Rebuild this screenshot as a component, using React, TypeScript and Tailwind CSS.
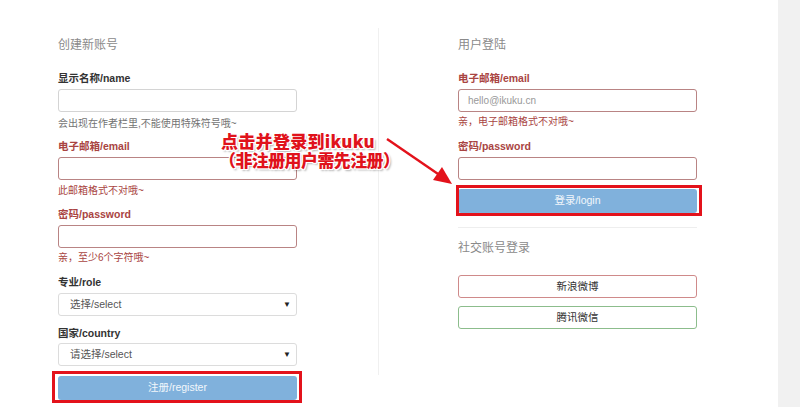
const font = { fontFamily: '"Liberation Sans", "Noto Sans CJK SC", sans-serif' };

function Label({ text, error }: { text: string; error?: boolean }) {
  return (
    <div
      className={`text-[10.5px] leading-[14px] font-bold ${error ? "text-[#a94442]" : "text-[#333]"}`}
    >
      {text}
    </div>
  );
}

function Help({ text, error }: { text: string; error?: boolean }) {
  return (
    <div className={`text-[10px] leading-[14px] ${error ? "text-[#a94442]" : "text-[#737373]"}`}>
      {text}
    </div>
  );
}

function Input({ error, placeholder }: { error?: boolean; placeholder?: string }) {
  return (
    <div
      className={`h-[23px] w-full rounded-[3px] border bg-white px-[9px] text-[10px] leading-[21px] text-[#999] ${
        error ? "border-[#b98484]" : "border-[#d4d4d4]"
      }`}
    >
      {placeholder}
    </div>
  );
}

function Select({ text }: { text: string }) {
  return (
    <div className="flex h-[23px] w-full items-center justify-between rounded-[3px] border border-[#dcdcdc] bg-white pl-[11px] pr-[5px] text-[10.5px] text-[#555]">
      <span>{text}</span>
      <span className="text-[8px] text-[#222]">▼</span>
    </div>
  );
}

function BlueButton({ text }: { text: string }) {
  return (
    <div className="flex h-[24px] w-full items-center justify-center rounded-[3px] bg-[#80b1dc] text-[10.5px] text-white/90">
      {text}
    </div>
  );
}

export default function App() {
  return (
    <div className="relative flex h-[407px] w-[800px] overflow-hidden bg-white" style={font}>
      <div className="flex h-full w-[778px] pl-[58px] pt-[37px]">
        {/* register */}
        <div className="flex w-[239px] flex-col">
          <div className="text-[12px] leading-[16px] text-[#8a8a8a]">创建新账号</div>
          <div className="mt-[18px]">
            <Label text="显示名称/name" />
          </div>
          <div className="mt-[4px]">
            <Input />
          </div>
          <div className="mt-[5px]">
            <Help text="会出现在作者栏里,不能使用特殊符号哦~" />
          </div>
          <div className="mt-[8px]">
            <Label text="电子邮箱/email" error />
          </div>
          <div className="mt-[4px]">
            <Input error />
          </div>
          <div className="mt-[4px]">
            <Help text="此邮箱格式不对哦~" error />
          </div>
          <div className="mt-[9px]">
            <Label text="密码/password" error />
          </div>
          <div className="mt-[4px]">
            <Input error />
          </div>
          <div className="mt-[3px]">
            <Help text="亲，至少6个字符哦~" error />
          </div>
          <div className="mt-[10px]">
            <Label text="专业/role" />
          </div>
          <div className="mt-[4px]">
            <Select text="选择/select" />
          </div>
          <div className="mt-[10px]">
            <Label text="国家/country" />
          </div>
          <div className="mt-[3px]">
            <Select text="请选择/select" />
          </div>
          <div className="mt-[10px]">
            <BlueButton text="注册/register" />
          </div>
        </div>

        {/* divider */}
        <div className="ml-[81px] mt-[-9px] h-[347px] w-px bg-[#f0f0f0]" />

        {/* login */}
        <div className="ml-[79px] flex w-[239px] flex-col">
          <div className="text-[12px] leading-[16px] text-[#8a8a8a]">用户登陆</div>
          <div className="mt-[18px]">
            <Label text="电子邮箱/email" error />
          </div>
          <div className="mt-[4px]">
            <Input error placeholder="hello@ikuku.cn" />
          </div>
          <div className="mt-[3px]">
            <Help text="亲，电子邮箱格式不对哦~" error />
          </div>
          <div className="mt-[10px]">
            <Label text="密码/password" error />
          </div>
          <div className="mt-[4px]">
            <Input error />
          </div>
          <div className="mt-[9px]">
            <BlueButton text="登录/login" />
          </div>
          <div className="mt-[14px] h-px w-full bg-[#eeeeee]" />
          <div className="mt-[12px] text-[12px] leading-[16px] text-[#8a8a8a]">社交账号登录</div>
          <div className="mt-[19px] flex h-[23px] items-center justify-center rounded-[3px] border border-[#cf8a8a] text-[10.5px] text-[#333]">
            新浪微博
          </div>
          <div className="mt-[8px] flex h-[23px] items-center justify-center rounded-[3px] border border-[#8cbd8c] text-[10.5px] text-[#333]">
            腾讯微信
          </div>
        </div>
      </div>
      <div className="h-full flex-1 bg-[#f1f1f1]" />

      {/* annotation overlays */}
      <div className="absolute left-[52px] top-[371px] h-[32px] w-[250px] border-[3px] border-[#e3121b]" />
      <div className="absolute left-[456px] top-[185px] h-[31px] w-[246px] border-[3px] border-[#e3121b]" />
      <div
        className="absolute left-[221px] top-[131px] text-[17px] font-black leading-[19px] tracking-[0.3px] text-[#e0121b]"
        style={{
          fontFamily: '"Noto Sans CJK SC", sans-serif',
          textShadow:
            "1px 0 0 #fff, -1px 0 0 #fff, 0 1px 0 #fff, 0 -1px 0 #fff, 1px 1px 0 #fff, -1px -1px 0 #fff, 1px -1px 0 #fff, -1px 1px 0 #fff, 2px 2px 2px rgba(0,0,0,0.3)",
        }}
      >
        <div>点击并登录到ikuku</div>
        <div className="ml-[-2px] tracking-[-0.6px]">（非注册用户需先注册）</div>
      </div>
      <svg className="absolute left-0 top-0" width="800" height="407" viewBox="0 0 800 407">
        <line x1="387" y1="139" x2="441" y2="176" stroke="#e3121b" strokeWidth="2.4" />
        <polygon points="452,184 433,180 442,167" fill="#e3121b" />
      </svg>
    </div>
  );
}
